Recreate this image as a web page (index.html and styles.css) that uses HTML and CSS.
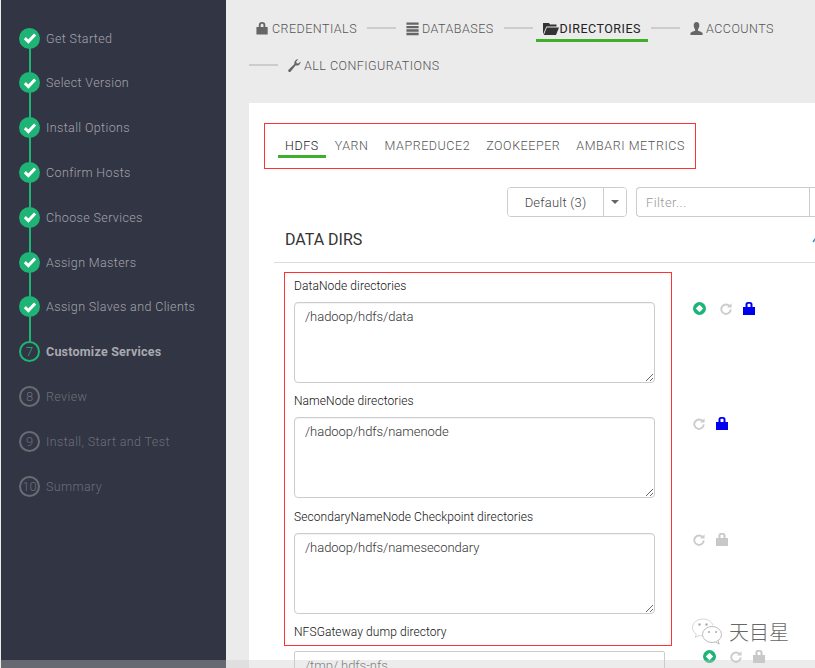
FILE: index.html
```html
<!DOCTYPE html>
<html lang="en">
<head>
<meta charset="utf-8">
<title>Customize Services</title>
<link rel="stylesheet" href="styles.css">
</head>
<body>
<div class="app">
  <aside class="sidebar">
    <ol class="steps">
      <li class="step done"><span class="dot"><svg viewBox="0 0 12 12" class="check"><path d="M1.6 6.2 4.6 9 10.4 3"/></svg></span><span class="step-label">Get Started</span></li>
      <li class="step done"><span class="dot"><svg viewBox="0 0 12 12" class="check"><path d="M1.6 6.2 4.6 9 10.4 3"/></svg></span><span class="step-label">Select Version</span></li>
      <li class="step done"><span class="dot"><svg viewBox="0 0 12 12" class="check"><path d="M1.6 6.2 4.6 9 10.4 3"/></svg></span><span class="step-label">Install Options</span></li>
      <li class="step done"><span class="dot"><svg viewBox="0 0 12 12" class="check"><path d="M1.6 6.2 4.6 9 10.4 3"/></svg></span><span class="step-label">Confirm Hosts</span></li>
      <li class="step done"><span class="dot"><svg viewBox="0 0 12 12" class="check"><path d="M1.6 6.2 4.6 9 10.4 3"/></svg></span><span class="step-label">Choose Services</span></li>
      <li class="step done"><span class="dot"><svg viewBox="0 0 12 12" class="check"><path d="M1.6 6.2 4.6 9 10.4 3"/></svg></span><span class="step-label">Assign Masters</span></li>
      <li class="step done"><span class="dot"><svg viewBox="0 0 12 12" class="check"><path d="M1.6 6.2 4.6 9 10.4 3"/></svg></span><span class="step-label">Assign Slaves and Clients</span></li>
      <li class="step current"><span class="dot">7</span><span class="step-label">Customize Services</span></li>
      <li class="step todo"><span class="dot">8</span><span class="step-label">Review</span></li>
      <li class="step todo"><span class="dot">9</span><span class="step-label">Install, Start and Test</span></li>
      <li class="step todo"><span class="dot">10</span><span class="step-label">Summary</span></li>
    </ol>
  </aside>

  <main class="main">
    <nav class="wizard-nav">
      <a class="nav-item"><svg class="nav-icon" viewBox="1 0 14 16"><path fill-rule="evenodd" d="M3.500 6.500V4.500a3.500 3.500 0 0 1 7 0V6.500H13V14.500H1V6.500zm2 0h3V4.500a1.500 1.500 0 0 0-3 0z"/></svg>CREDENTIALS</a>
      <span class="connector"></span>
      <a class="nav-item"><svg class="nav-icon" viewBox="1 0 14 16"><path d="M1 1.500h13v2.600H1zM1 5.200h13v2.600H1zM1 8.900h13v2.600H1zM1 12.600h13v2.600H1z"/></svg>DATABASES</a>
      <span class="connector"></span>
      <a class="nav-item active"><svg class="nav-icon wide" viewBox="0 0 16 14"><path d="M0 13V1.500h6l1 1.500h6.500v2H3.400zM3.800 6H16l-3 7.500H.8z"/></svg>DIRECTORIES</a>
      <span class="connector"></span>
      <a class="nav-item"><svg class="nav-icon" viewBox="1 0 14 16"><path d="M7.500 1c2 0 3 1.500 3 3.600C10.500 6.600 9.700 8 9.100 8.800v1.600c1.600.6 4.900 1.400 4.900 3V15H1v-1.600c0-1.600 3.300-2.400 4.900-3V8.800C5.300 8 4.500 6.600 4.500 4.600 4.500 2.500 5.500 1 7.500 1z"/></svg>ACCOUNTS</a>
      <span class="connector"></span>
      <a class="nav-item"><svg class="nav-icon" viewBox="1 0 14 16"><path d="M14 3.600a4 4 0 0 1-5.200 4.200L3.400 14.400a1.500 1.500 0 0 1-2.300-2L7.400 6.400A4 4 0 0 1 11.600 1.400L9.300 3.700l.4 1.800 1.800.4z"/></svg>ALL CONFIGURATIONS</a>
    </nav>

    <section class="card">
      <div class="service-tabs">
        <a class="service-tab active">HDFS</a>
        <a class="service-tab">YARN</a>
        <a class="service-tab">MAPREDUCE2</a>
        <a class="service-tab">ZOOKEEPER</a>
        <a class="service-tab">AMBARI METRICS</a>
      </div>

      <div class="toolbar">
        <div class="btn-group">
          <button class="btn btn-main" type="button">Default (3)</button>
          <button class="btn btn-caret" type="button"><span class="caret"></span></button>
        </div>
        <div class="filter">
          <input class="filter-input" type="text" placeholder="Filter...">
          <button class="filter-btn" type="button"></button>
        </div>
      </div>

      <header class="section-head">
        <h2 class="section-title">DATA DIRS</h2>
        <svg class="section-toggle" viewBox="0 0 8 8"><path d="M1 6 4 2l3 4"/></svg>
      </header>

      <div class="props">
        <div class="props-box">
          <div class="field">
            <label class="field-label">DataNode directories</label>
            <textarea class="field-area">/hadoop/hdfs/data</textarea>
          </div>
          <div class="field">
            <label class="field-label">NameNode directories</label>
            <textarea class="field-area">/hadoop/hdfs/namenode</textarea>
          </div>
          <div class="field">
            <label class="field-label">SecondaryNameNode Checkpoint directories</label>
            <textarea class="field-area">/hadoop/hdfs/namesecondary</textarea>
          </div>
          <div class="field last">
            <label class="field-label">NFSGateway dump directory</label>
          </div>
        </div>
        <div class="actions">
          <div class="action-row">
            <svg class="ic-undo" viewBox="0 0 14 14"><circle cx="7" cy="7" r="7"/><path class="hole" d="M7 3 11 7 7 11 3 7z"/></svg>
            <svg class="ic-refresh" viewBox="0 0 14 14"><path class="arc" d="M11.200 4.300A5.500 5.500 0 1 0 12.500 8"/><path class="head" d="M8.200 5.800H13.500V1z"/></svg>
            <svg class="ic-lock blue" viewBox="0 0 12 13"><path fill-rule="evenodd" d="M2.500 5V2.500A2.500 2.500 0 0 1 5 0h2a2.500 2.500 0 0 1 2.500 2.500V5H12v8H0V5zm2 0h3V2.400a.6.6 0 0 0-.6-.6H5.100a.6.6 0 0 0-.6.6z"/></svg>
          </div>
          <div class="action-row">
            <svg class="ic-refresh" viewBox="0 0 14 14"><path class="arc" d="M11.200 4.300A5.500 5.500 0 1 0 12.500 8"/><path class="head" d="M8.200 5.800H13.500V1z"/></svg>
            <svg class="ic-lock blue" viewBox="0 0 12 13"><path fill-rule="evenodd" d="M2.500 5V2.500A2.500 2.500 0 0 1 5 0h2a2.500 2.500 0 0 1 2.500 2.500V5H12v8H0V5zm2 0h3V2.400a.6.6 0 0 0-.6-.6H5.100a.6.6 0 0 0-.6.6z"/></svg>
          </div>
          <div class="action-row">
            <svg class="ic-refresh" viewBox="0 0 14 14"><path class="arc" d="M11.200 4.300A5.500 5.500 0 1 0 12.500 8"/><path class="head" d="M8.200 5.800H13.500V1z"/></svg>
            <svg class="ic-lock grey" viewBox="0 0 12 13"><path fill-rule="evenodd" d="M2.500 5V2.500A2.500 2.500 0 0 1 5 0h2a2.500 2.500 0 0 1 2.500 2.500V5H12v8H0V5zm2 0h3V2.400a.6.6 0 0 0-.6-.6H5.100a.6.6 0 0 0-.6.6z"/></svg>
          </div>
        </div>
      </div>

      <div class="next-row">
        <input class="next-input" type="text" value="/tmp/.hdfs-nfs">
        <div class="action-row">
          <svg class="ic-undo" viewBox="0 0 14 14"><circle cx="7" cy="7" r="7"/><path class="hole" d="M7 3 11 7 7 11 3 7z"/></svg>
          <svg class="ic-refresh" viewBox="0 0 14 14"><path class="arc" d="M11.200 4.300A5.500 5.500 0 1 0 12.500 8"/><path class="head" d="M8.200 5.800H13.500V1z"/></svg>
          <svg class="ic-lock grey" viewBox="0 0 12 13"><path fill-rule="evenodd" d="M2.500 5V2.500A2.500 2.500 0 0 1 5 0h2a2.500 2.500 0 0 1 2.500 2.500V5H12v8H0V5zm2 0h3V2.400a.6.6 0 0 0-.6-.6H5.100a.6.6 0 0 0-.6.6z"/></svg>
        </div>
      </div>
    </section>
  </main>
</div>

<div class="watermark">
  <svg class="wm-icon" viewBox="0 0 32 28">
    <path class="wm-back" d="M12 1C6 1 1.500 4.800 1.500 9.500c0 2.700 1.500 5 3.800 6.600L4.300 19.500l3.900-2c1 .3 2 .5 3 .5"/>
    <path class="wm-back" d="M12 1c4.800 0 9 2.600 10 6.500"/>
    <ellipse cx="21" cy="16.500" rx="9.500" ry="8"/>
    <path d="M27 22.500l1.200 3.500-3.500-2"/>
    <circle class="wm-eye" cx="8.500" cy="6.500" r="1.200"/>
    <circle class="wm-eye" cx="15.500" cy="6.500" r="1.200"/>
    <circle class="wm-eye" cx="18" cy="14" r="1"/>
    <circle class="wm-eye" cx="25" cy="14" r="1"/>
  </svg>
  <span class="wm-text">天目星</span>
</div>
<div class="bottom-bar"></div>
</body>
</html>
```

FILE: styles.css
```css
* { box-sizing: border-box; }

html, body {
  margin: 0;
  height: 100%;
  overflow: hidden;
}

body {
  background: #ebebeb;
  font-family: Roboto, "Liberation Sans", sans-serif;
  font-weight: 300;
  font-size: 13px;
  color: #333;
}

.app {
  display: flex;
  height: 668px;
  padding-left: 1px;
}

/* Sidebar */
.sidebar {
  flex: 0 0 225px;
  background: #323544;
  padding: 15.700px 0 0 18px;
}

.steps {
  list-style: none;
  margin: 0;
  padding: 0;
}

.step {
  position: relative;
  display: flex;
  align-items: center;
  gap: 6px;
  height: 44.800px;
  font-size: 12.500px;
  letter-spacing: 0.380px;
  color: #a3a4ab;
}

.dot {
  position: relative;
  z-index: 1;
  flex: 0 0 21px;
  display: flex;
  align-items: center;
  justify-content: center;
  width: 21px;
  height: 21px;
  border-radius: 50%;
  font-size: 13px;
  letter-spacing: 0;
}

.step.done .dot { background: #1eb475; }

.check {
  width: 14px;
  height: 14px;
  fill: none;
  stroke: #fff;
  stroke-width: 2.600;
}

.step.done::after {
  content: "";
  position: absolute;
  left: 9.500px;
  top: 30px;
  width: 2px;
  height: 36px;
  background: #1eb475;
}

.step.current .dot {
  border: 2px solid #1eb475;
  color: #1eb475;
  background: #323544;
}

.step.current .step-label {
  font-weight: 700;
  letter-spacing: 0.220px;
  color: #a9aab0;
}

.step.todo { color: #6d6f78; }

.step.todo .dot {
  border: 2px solid #6a6c74;
  color: #6d6f78;
}

/* Main */
.main {
  flex: 1;
  min-width: 0;
  padding: 15px 0 0 23px;
}

.wizard-nav {
  display: flex;
  flex-wrap: wrap;
  align-items: center;
  align-content: flex-start;
  gap: 10px 3px;
  height: 88px;
  margin-right: 20px;
}

.nav-item {
  display: flex;
  align-items: center;
  height: 27px;
  padding: 2px 7px 0;
  font-size: 12.500px;
  font-weight: 300;
  letter-spacing: 0.470px;
  color: #555;
  border-bottom: 3px solid transparent;
}

.nav-item.active {
  font-weight: 400;
  letter-spacing: 0.500px;
  color: #222;
  border-bottom-color: #3fae2a;
}

.nav-icon {
  flex: none;
  width: 14px;
  height: 15px;
  margin-right: 2px;
  fill: #666;
}

.nav-icon.wide {
  width: 16px;
  margin-right: 1px;
  fill: #333;
}

.connector {
  flex: 0 0 29px;
  height: 2px;
  margin-bottom: 1px;
  background: #ccc;
}

/* Card */
.card {
  background: #fff;
  height: 565px;
  padding: 20px 0 0 15px;
}

.service-tabs {
  display: inline-flex;
  gap: 2px;
  height: 46px;
  padding: 7px 3px 0 13px;
  border: 1px solid #f33;
}

.service-tab {
  height: 27px;
  padding: 0 7px;
  line-height: 30px;
  font-size: 12.500px;
  font-weight: 300;
  letter-spacing: 0.560px;
  color: #555;
  border-bottom: 3px solid transparent;
}

.service-tab.active {
  color: #222;
  border-bottom-color: #3fae2a;
}

.toolbar {
  display: flex;
  gap: 9px;
  margin: 18px 0 0 243px;
}

.btn-group {
  flex: none;
  display: flex;
  height: 30px;
  border: 1px solid #ccc;
  border-radius: 4px;
  overflow: hidden;
}

.btn {
  flex: none;
  border: 0;
  background: #fff;
  padding: 0;
  font-family: inherit;
  font-weight: 300;
  font-size: 13px;
  letter-spacing: 0.200px;
  color: #444;
}

.btn-main {
  width: 96px;
  border-right: 1px solid #ccc;
}

.btn-caret {
  width: 22px;
  display: flex;
  align-items: center;
  justify-content: center;
}

.caret {
  width: 0;
  height: 0;
  border: 4px solid transparent;
  border-top-color: #666;
  border-bottom: 0;
}

.filter {
  display: flex;
  flex: 1;
  height: 30px;
  border: 1px solid #ccc;
  border-right: 0;
  border-radius: 4px 0 0 4px;
}

.filter-input {
  flex: none;
  width: 173px;
  border: 0;
  border-right: 1px solid #ccc;
  outline: 0;
  padding: 0 9px;
  font-family: inherit;
  font-weight: 300;
  font-size: 13px;
  letter-spacing: 0.400px;
  background: transparent;
}

.filter-input::placeholder { color: #999; opacity: 1; }

.filter-btn {
  flex: 1;
  border: 0;
  background: #fff;
}

.section-head {
  display: flex;
  justify-content: space-between;
  align-items: center;
  height: 46px;
  margin: 0 0 9px 10px;
  padding-left: 11px;
  border-bottom: 1px solid #ddd;
}

.section-title {
  margin: 0;
  font-size: 16px;
  font-weight: 400;
  color: #333;
}

.section-toggle {
  flex: none;
  width: 8px;
  height: 8px;
  margin-right: -5px;
  fill: none;
  stroke: #3a8ac4;
  stroke-width: 1.500;
}

.props {
  display: flex;
  gap: 21px;
  margin-left: 20px;
}

.props-box {
  flex: 0 0 388px;
  height: 374px;
  padding: 3px 9px 0;
  border: 1px solid #f33;
}

.field {
  height: 115.400px;
}

.field.last { height: auto; }

.field-label {
  display: block;
  height: 20px;
  line-height: 20px;
  margin-bottom: 6px;
  font-size: 12px;
  font-weight: 300;
  letter-spacing: 0.080px;
  color: #111;
}

.field-area {
  display: block;
  width: 361px;
  height: 81px;
  padding: 4px 10px;
  border: 1px solid #ccc;
  border-radius: 4px;
  outline: 0;
  font-family: inherit;
  font-weight: 300;
  font-size: 13px;
  line-height: 20px;
  letter-spacing: -0.050px;
  color: #333;
  box-shadow: inset 0 1px 1px rgba(0,0,0,.05);
}

.actions {
  display: flex;
  flex-direction: column;
  padding-top: 30px;
}

.action-row {
  display: flex;
  align-items: flex-start;
  gap: 11px;
  height: 115.400px;
}

.ic-undo { width: 13px; height: 13px; flex: none; margin-right: 3px; }
.ic-undo circle { fill: #1eb475; }
.ic-undo .hole { fill: #fff; }

.ic-refresh { width: 12px; height: 13px; flex: none; }
.ic-refresh .arc { fill: none; stroke: #ccc; stroke-width: 2.200; }
.ic-refresh .head { fill: #ccc; }

.ic-lock { width: 12px; height: 13px; flex: none; }
.ic-lock.blue { fill: #0000f0; }
.ic-lock.grey { fill: #c8c8c8; }

.next-row {
  display: flex;
  align-items: flex-start;
  gap: 38px;
  margin: 3px 0 0 30px;
}

.next-input {
  flex: none;
  width: 371px;
  height: 34px;
  padding: 0 10px 6px;
  border: 1px solid #ccc;
  border-radius: 2px;
  outline: 0;
  font-family: inherit;
  font-weight: 300;
  font-size: 13px;
  letter-spacing: -0.050px;
  color: #555;
}

.next-row .action-row {
  height: 13px;
  margin-top: -1px;
}

/* Overlays */
.watermark {
  position: absolute;
  left: 691px;
  top: 617px;
  display: flex;
  align-items: center;
  gap: 6px;
}

.wm-icon {
  width: 32px;
  height: 28px;
  fill: rgba(255,255,255,.85);
  stroke: #aaa;
  stroke-width: .8;
}

.wm-icon .wm-back { stroke: #ccc; }
.wm-icon .wm-eye { fill: #aaa; stroke: none; }

.wm-text {
  font-family: "Noto Sans CJK SC", sans-serif;
  font-size: 20px;
  font-weight: 300;
  line-height: 29px;
  color: #666;
}

.bottom-bar {
  position: absolute;
  left: 1px;
  right: 0;
  top: 660px;
  height: 8px;
  background: rgba(200,200,200,.35);
}
```
